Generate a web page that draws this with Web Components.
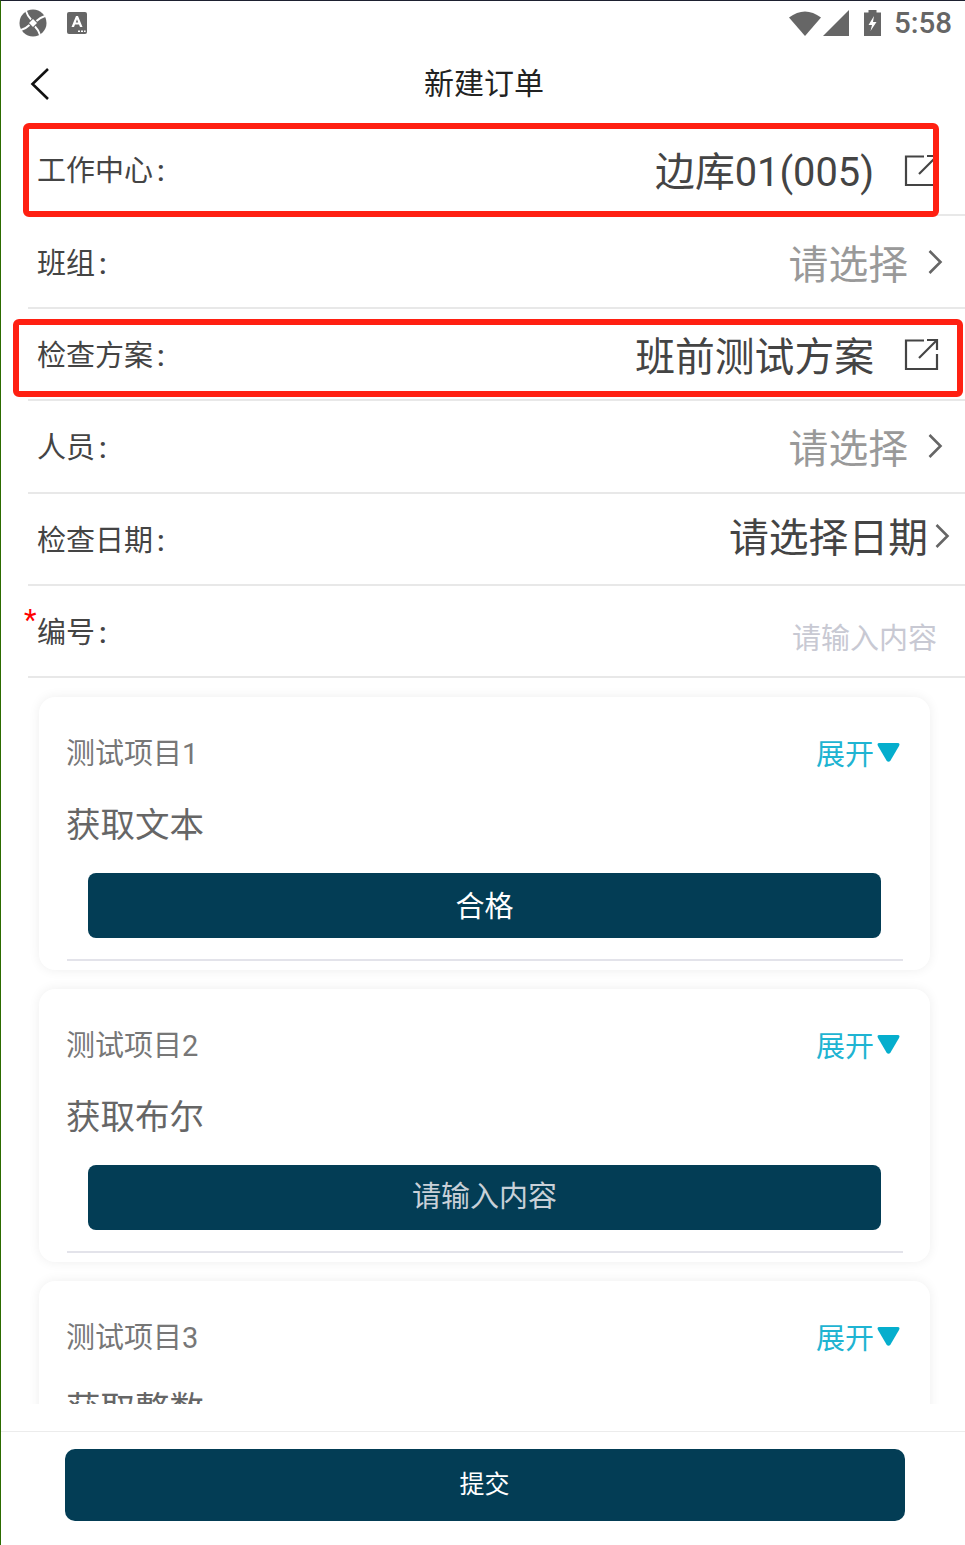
<!DOCTYPE html>
<html lang="zh">
<head>
<meta charset="utf-8">
<title>新建订单</title>
<style>
  html, body { margin: 0; padding: 0; background: #fff; }
  body { font-family: Roboto, "Noto Sans CJK SC", sans-serif; }
</style>
</head>
<body>
<order-page>
  <status-bar slot="top"></status-bar>
  <nav-bar slot="top">新建订单</nav-bar>

  <form-row label="工作中心" icon="open">边库01(005)</form-row>
  <form-row label="班组" tone="muted" icon="chevron">请选择</form-row>
  <form-row label="检查方案" icon="open">班前测试方案</form-row>
  <form-row label="人员" tone="muted" icon="chevron">请选择</form-row>
  <form-row label="检查日期" icon="chevron" tone="date">请选择日期</form-row>
  <form-row label="编号" required tone="placeholder">请输入内容</form-row>

  <check-card title="测试项目1" kind="获取文本">合格</check-card>
  <check-card title="测试项目2" kind="获取布尔" dim>请输入内容</check-card>
  <check-card title="测试项目3" kind="获取整数"></check-card>

  <submit-bar slot="bottom">提交</submit-bar>

  <mark-box slot="marks" style="left:22px;top:122px;width:916px;height:94px"></mark-box>
  <mark-box slot="marks" style="left:12px;top:318px;width:950px;height:78px"></mark-box>
</order-page>

<script>
// page frame: status + nav on top, clipped form in the middle, submit bar below
class OrderPage extends HTMLElement {
  constructor() {
    super();
    this.attachShadow({ mode: 'open' }).innerHTML = `
      <style>
        :host {
          display: flex;
          flex-direction: column;
          position: relative;
          box-sizing: border-box;
          width: 965px;
          height: 1545px;
          overflow: hidden;
          background: #fff;
          border-top: 1px solid #1d2030;
          border-left: 1px solid #2c6b00;
        }
        .scroll { height: 1280px; overflow: hidden; display: flex; flex-direction: column; }
      </style>
      <slot name="top"></slot>
      <div class="scroll"><slot></slot></div>
      <slot name="bottom"></slot>
      <slot name="marks"></slot>
    `;
  }
}

class StatusBar extends HTMLElement {
  constructor() {
    super();
    this.attachShadow({ mode: 'open' }).innerHTML = `
      <style>
        :host {
          display: flex;
          align-items: center;
          height: 44px;
          padding: 0 13px 0 18px;
          color: #666;
        }
        svg { display: block; fill: #666; }
        .app { margin-left: 20px; }
        .space { flex: 1; }
        .signal { margin-left: 2px; }
        .battery { margin-left: 15px; margin-top: -1px; }
        .time { margin-left: 13px; font: 500 29.5px Roboto, sans-serif; line-height: 44px; }
      </style>
      <svg width="28" height="28" viewBox="0 0 28 28">
        <circle cx="14" cy="14" r="13.5"/>
        <g fill="none" stroke="#fff" stroke-width="1.9">
          <path d="M7 2 Q8.5 7 12 10.5"/>
          <path d="M26 7 Q21 8.5 17.5 12"/>
          <path d="M21 26 Q19.5 21 16 17.5"/>
          <path d="M2 21 Q7 19.5 10.5 16"/>
        </g>
        <path d="M14 10 L18 14 L14 18 L10 14Z" fill="#fff"/>
      </svg>
      <svg class="app" width="20" height="22" viewBox="0 0 20 22">
        <rect width="20" height="22" rx="2"/>
        <path d="M4.5 15 L9 4 H11 L15.5 15 H13 L12 12.4 H8 L7 15Z M8.8 10.4 H11.2 L10 7.2Z" fill="#fff" fill-rule="evenodd"/>
        <path d="M11 18.5h2v1.5h-2zM14 18.5h2v1.5h-2zM17 18.5h1.6v1.5h-1.6z" fill="#fff"/>
      </svg>
      <span class="space"></span>
      <svg width="32" height="25" viewBox="0 0 32 25"><path d="M0 6.5 Q16 -5.5 32 6.5 L16 25Z"/></svg>
      <svg class="signal" width="26" height="26" viewBox="0 0 26 26"><path d="M26 0 V26 H0Z"/></svg>
      <svg class="battery" width="17" height="26" viewBox="0 0 17 26">
        <path d="M4.5 0 H12.5 V2.5 H17 V26 H0 V2.5 H4.5Z"/>
        <path d="M10 6 L4.5 15 H8 L6.5 21 L12.5 12 H9Z" fill="#fff"/>
      </svg>
      <span class="time">5:58</span>
    `;
  }
}

class NavBar extends HTMLElement {
  constructor() {
    super();
    this.attachShadow({ mode: 'open' }).innerHTML = `
      <style>
        :host {
          display: flex;
          align-items: center;
          justify-content: center;
          position: relative;
          box-sizing: border-box;
          height: 79px;
          padding: 0 0 8px 2px;
          font-size: 30px;
          color: #222;
        }
        svg { position: absolute; left: 28px; top: 22px; }
      </style>
      <svg width="22" height="34" viewBox="0 0 22 34" fill="none" stroke="#111" stroke-width="2.6">
        <path d="M19 2 L3.5 17 L19 32"/>
      </svg>
      <slot></slot>
    `;
  }
}

const ROW_ICONS = {
  open: `<svg class="open" width="35" height="33" viewBox="0 0 35 33" fill="none" stroke="#444" stroke-width="2.2">
    <path d="M20 2.5 H2 V31 H33 V16"/><path d="M15 20 L33 2"/><path d="M23 2 H33 V12"/></svg>`,
  chevron: `<svg class="chev" width="16" height="26" viewBox="0 0 16 26" fill="none" stroke="#666" stroke-width="2.6">
    <path d="M2.5 2 L13.5 13 L2.5 24"/></svg>`
};

class FormRow extends HTMLElement {
  constructor() {
    super();
    const icon = ROW_ICONS[this.getAttribute('icon')] || '';
    const star = this.hasAttribute('required') ? '<i>*</i>' : '';
    this.attachShadow({ mode: 'open' }).innerHTML = `
      <style>
        :host {
          display: flex;
          align-items: center;
          flex: none;
          position: relative;
          box-sizing: border-box;
          height: 92.4px;
          margin-left: 27px;
          padding: 0 26px 0 9px;
          border-bottom: 2px solid #e8e8e8;
        }
        .label { flex: 1; margin-top: -2px; font-size: 29px; color: #444; }
        .label b { font-weight: 500; margin-left: 4px; }
        .value { font-size: 39.8px; color: #444; white-space: nowrap; margin-top: -1px; }
        :host([tone=muted]) .value { color: #999; margin-right: 19px; }
        :host([tone=date]) { padding-right: 19px; }
        :host([tone=date]) .value { margin-top: -9px; margin-right: 6px; }
        :host([tone=date]) .chev { margin-top: -5px; }
        :host([tone=placeholder]) { padding-right: 28px; }
        :host([tone=placeholder]) .value { font-size: 29px; color: #c8c9d3; margin-top: 10px; }
        svg { display: block; flex: none; }
        .open { margin-left: 30px; margin-top: 2px; }
        .chev { margin-right: -4px; }
        i {
          position: absolute;
          left: -4px;
          top: 20px;
          font: normal 29px/1 Roboto, sans-serif;
          color: #f00;
        }
      </style>
      ${star}
      <span class="label">${this.getAttribute('label')}<b>:</b></span>
      <span class="value"><slot></slot></span>
      ${icon}
    `;
  }
}

class CheckCard extends HTMLElement {
  constructor() {
    super();
    this.attachShadow({ mode: 'open' }).innerHTML = `
      <style>
        :host {
          display: block;
          flex: none;
          box-sizing: border-box;
          height: 273px;
          margin: 19px 35px 0 38px;
          padding: 36px 27px 0 28px;
          background: #fff;
          border-radius: 16px;
          box-shadow: 0 0 12px rgba(0, 0, 0, .07);
        }
        .head { display: flex; align-items: center; justify-content: space-between; height: 40px; margin-top: -2px; }
        .title { margin-left: -1px; font-size: 29px; color: #777; }
        .toggle { display: flex; align-items: center; gap: 3px; margin: 2px 3px 0 0; font-size: 29px; color: #1fb4d2; }
        .toggle svg { margin-top: 1px; }
        .kind { height: 40px; margin: 34px 0 0 -1px; font-size: 34.5px; line-height: 40px; color: #666; }
        button {
          display: block;
          box-sizing: border-box;
          width: 793px;
          height: 65px;
          margin: 27.5px 0 0 21px;
          padding: 0 0 3px;
          border: 0;
          border-radius: 8px;
          background: #033d55;
          color: #fff;
          font: 29px Roboto, "Noto Sans CJK SC", sans-serif;
        }
        :host([dim]) button { color: #c8d0d8; padding-bottom: 7px; }
        hr { height: 2px; margin: 21.5px 0 0; border: 0; background: #e3e3ea; }
      </style>
      <div class="head">
        <span class="title">${this.getAttribute('title')}</span>
        <span class="toggle">展开
          <svg width="23" height="19" viewBox="0 0 23 19"><path d="M2.5 0 H20.5 Q23.5 0 22 3 L13.5 17.5 Q11.5 20 9.5 17.5 L1 3 Q-.5 0 2.5 0Z" fill="#05aecd"/></svg>
        </span>
      </div>
      <div class="kind">${this.getAttribute('kind')}</div>
      <button><slot></slot></button>
      <hr>
    `;
  }
}

class SubmitBar extends HTMLElement {
  constructor() {
    super();
    this.attachShadow({ mode: 'open' }).innerHTML = `
      <style>
        :host { display: block; flex: none; padding-top: 27px; }
        .bar { border-top: 1px solid #ececec; padding: 17px 60px 0 64px; }
        button {
          display: block;
          width: 100%;
          height: 72px;
          padding: 0 1px 6px 0;
          border: 0;
          border-radius: 10px;
          background: #033d55;
          color: #fff;
          font: 25px Roboto, "Noto Sans CJK SC", sans-serif;
        }
      </style>
      <div class="bar"><button><slot></slot></button></div>
    `;
  }
}

// red annotation frames lying over the screenshot
class MarkBox extends HTMLElement {
  constructor() {
    super();
    this.attachShadow({ mode: 'open' }).innerHTML = `
      <style>
        :host {
          display: block;
          position: absolute;
          box-sizing: border-box;
          border: 6px solid #ff2012;
          border-radius: 6px;
        }
      </style>
    `;
  }
}

customElements.define('order-page', OrderPage);
customElements.define('status-bar', StatusBar);
customElements.define('nav-bar', NavBar);
customElements.define('form-row', FormRow);
customElements.define('check-card', CheckCard);
customElements.define('submit-bar', SubmitBar);
customElements.define('mark-box', MarkBox);
</script>
</body>
</html>
